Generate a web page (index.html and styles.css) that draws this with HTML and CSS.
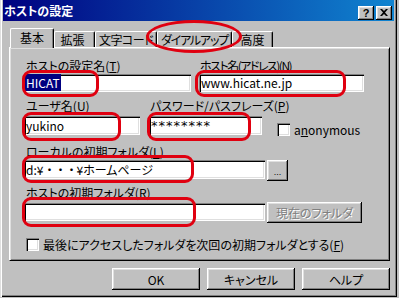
FILE: index.html
```html
<!DOCTYPE html>
<html lang="ja">

<head>
    <meta charset="UTF-8">
    <title>ホストの設定</title>
    <link rel="stylesheet" href="styles.css">
</head>

<body>

    <div class="window">
        <div class="titlebar">
            <span class="title">ホストの設定</span>
            <div class="caption-btns">
                <span class="cap-btn help">?</span>
                <span class="cap-btn">
                    <svg width="8" height="7" viewBox="0 0 8 7">
                        <path d="M0 0 L2 0 L4 2 L6 0 L8 0 L5 3.5 L8 7 L6 7 L4 5 L2 7 L0 7 L3 3.5 Z" fill="#000"/>
                    </svg>
                </span>
            </div>
        </div>

        <div class="tabs">
            <div class="tab active t-basic">基本</div>
            <div class="tab t-ext">拡張</div>
            <div class="tab t-code">文字コード</div>
            <div class="tab t-dial">ダイアルアップ</div>
            <div class="tab t-adv">高度</div>
        </div>

        <div class="panel">
            <div class="row row-a">
                <div class="field f-name">
                    <label>ホストの設定名(<u>T</u>)</label>
                    <div class="edit"><span class="sel">HICAT</span></div>
                </div>
                <div class="field f-host">
                    <label>ホスト名(アドレス)(<u>N</u>)</label>
                    <div class="edit">www.hicat.ne.jp</div>
                </div>
            </div>

            <div class="row row-b">
                <div class="field f-user">
                    <label>ユーザ名(<u>U</u>)</label>
                    <div class="edit">yukino</div>
                </div>
                <div class="field f-pass">
                    <label>パスワード/パスフレーズ(<u>P</u>)</label>
                    <div class="edit stars">********</div>
                </div>
                <div class="check-item anon">
                    <span class="check"></span>
                    <span>a<u>n</u>onymous</span>
                </div>
            </div>

            <div class="row row-c">
                <div class="field f-wide">
                    <label>ローカルの初期フォルダ(<u>L</u>)</label>
                    <div class="edit">d:¥<span class="dots">・・・</span>¥ホームページ</div>
                </div>
                <div class="btn btn-browse">...</div>
            </div>

            <div class="row row-d">
                <div class="field f-wide">
                    <label>ホストの初期フォルダ(<u>R</u>)</label>
                    <div class="edit"></div>
                </div>
                <div class="btn btn-current disabled">現在のフォルダ</div>
            </div>

            <div class="row row-e">
                <div class="check-item">
                    <span class="check"></span>
                    <span>最後にアクセスしたフォルダを次回の初期フォルダとする(<u>F</u>)</span>
                </div>
            </div>
        </div>

        <div class="buttons">
            <div class="btn btn-main">OK</div>
            <div class="btn btn-main">キャンセル</div>
            <div class="btn btn-main">ヘルプ</div>
        </div>

        <!-- red annotation marks -->
        <div class="mark m-tab"></div>
        <div class="mark m-name"></div>
        <div class="mark m-host"></div>
        <div class="mark m-user"></div>
        <div class="mark m-pass"></div>
        <div class="mark m-local"></div>
        <div class="mark m-remote"></div>
    </div>

</body>

</html>
```

FILE: styles.css
```css
body {
    margin: 0;
    background-color: #c0c0c0;
    font-family: "Noto Sans CJK JP", sans-serif;
    font-size: 12px;
    font-feature-settings: "palt";
    color: #000;
}

.window {
    position: relative;
    width: 397px;
    height: 297px;
    box-sizing: border-box;
    padding: 0 3px;
    background-color: #c0c0c0;
    box-shadow: inset 1px 0 #dfdfdf, inset 2px 0 #fff, inset -1px -1px #000, inset -2px -2px #808080;
}

/* title bar */

.titlebar {
    display: flex;
    align-items: center;
    justify-content: space-between;
    height: 21px;
    background: linear-gradient(to right, #000080, #1084d0);
}

.title {
    color: #fff;
    font-weight: bold;
    padding-left: 1px;
    line-height: 21px;
}

.caption-btns {
    display: flex;
    gap: 2px;
    margin-right: 2px;
    margin-top: 4px;
}

.cap-btn {
    display: flex;
    align-items: center;
    justify-content: center;
    width: 16px;
    height: 14px;
    box-sizing: border-box;
    background-color: #c0c0c0;
    box-shadow: inset -1px -1px #000, inset 1px 1px #fff, inset -2px -2px #808080, inset 2px 2px #dfdfdf;
}

.cap-btn.help {
    font-family: "Liberation Sans", sans-serif;
    font-weight: bold;
    font-size: 11px;
    line-height: 14px;
}

/* tabs */

.tabs {
    display: flex;
    align-items: flex-end;
    height: 19px;
    margin-top: 7px;
    padding-left: 7px;
}

.tab {
    height: 16px;
    box-sizing: border-box;
    border-top: 1px solid #fff;
    border-left: 1px solid #fff;
    border-right: 1px solid #000;
    border-radius: 2px 2px 0 0;
    box-shadow: inset -1px 0 #808080;
    text-align: center;
    line-height: 15px;
    white-space: nowrap;
}

.tab.active {
    position: relative;
    z-index: 1;
    height: 20px;
    margin-bottom: -1px;
    background-color: #c0c0c0;
    line-height: 18px;
}

.t-basic { width: 44px; }
.t-ext { width: 41px; padding-right: 4px; }
.t-code { width: 62px; letter-spacing: -0.5px; }
.t-dial { width: 75px; letter-spacing: -1.2px; }
.t-adv { width: 41px; }

/* tab page */

.panel {
    width: 381px;
    height: 214px;
    box-sizing: border-box;
    margin-left: 6px;
    padding-left: 14px;
    border-top: 1px solid #fff;
    border-left: 1px solid #fff;
    border-right: 1px solid #000;
    border-bottom: 1px solid #000;
    box-shadow: inset 1px 1px #dfdfdf, inset -1px -1px #808080;
}

.row {
    display: flex;
    align-items: flex-start;
}

.field {
    display: flex;
    flex-direction: column;
}

.field label {
    height: 14px;
    line-height: 14px;
    padding-left: 2px;
    white-space: nowrap;
}

.edit {
    height: 19px;
    box-sizing: border-box;
    padding: 0 2px;
    background-color: #fff;
    box-shadow: inset 1px 1px #808080, inset 2px 2px #000, inset -1px -1px #fff, inset -2px -2px #dfdfdf;
    line-height: 19px;
    white-space: nowrap;
    overflow: hidden;
}

.sel {
    background-color: #000080;
    color: #fff;
    padding: 0 1px;
    margin-left: -1px;
}

.stars {
    font-family: "DejaVu Sans", sans-serif;
    font-size: 13px;
    letter-spacing: 1px;
}

.dots {
    font-feature-settings: normal;
    letter-spacing: -1px;
}

.row-a { margin-top: 11px; }
.row-a .edit { height: 18px; line-height: 18px; margin-top: 1px; }
.f-name { width: 167px; }
.f-host { width: 165px; margin-left: 8px; }
.f-host label { padding-left: 1px; letter-spacing: -1.5px; }

.row-b { margin-top: 7px; }
.row-b .edit { margin-top: 3px; }
.f-user { width: 116px; }
.f-pass { width: 113px; margin-left: 9px; }
.f-pass label { padding-left: 1px; }

.check-item {
    display: flex;
    align-items: center;
    gap: 4px;
    white-space: nowrap;
}

.check {
    width: 13px;
    height: 13px;
    box-sizing: border-box;
    background-color: #fff;
    box-shadow: inset 1px 1px #808080, inset 2px 2px #000, inset -1px -1px #fff, inset -2px -2px #dfdfdf;
}

.anon {
    margin-left: 15px;
    margin-top: 22px;
}

.row-c { margin-top: 7px; }
.row-c .edit { margin-top: 1px; }
.f-wide { width: 241px; }

.row-d { margin-top: 5px; }
.row-d .edit { height: 18px; margin-top: 3px; }

.btn {
    display: flex;
    align-items: center;
    justify-content: center;
    box-sizing: border-box;
    background-color: #c0c0c0;
    box-shadow: inset -1px -1px #000, inset 1px 1px #fff, inset -2px -2px #808080, inset 2px 2px #dfdfdf;
    white-space: nowrap;
}

.btn-browse {
    width: 21px;
    height: 21px;
    margin-left: 2px;
    margin-top: 15px;
    font-family: "Liberation Sans", sans-serif;
    font-size: 9px;
    padding-top: 2px;
}

.btn-current {
    width: 95px;
    height: 21px;
    margin-left: 2px;
    margin-top: 16px;
}

.disabled {
    color: #808080;
    text-shadow: 1px 1px #fff;
}

.row-e { margin-top: 13px; padding-left: 2px; }

/* dialog buttons */

.buttons {
    display: flex;
    justify-content: flex-end;
    gap: 7px;
    margin-top: 7px;
    padding-right: 4px;
}

.btn-main {
    width: 88px;
    height: 22px;
}

/* red annotation marks */

.mark {
    position: absolute;
    box-sizing: border-box;
    border: 3px solid #e00010;
    border-radius: 9px;
}

.m-tab { left: 146px; top: 20px; width: 96px; height: 33px; border-radius: 50%; }
.m-name { left: 22px; top: 70px; width: 77px; height: 27px; }
.m-host { left: 195px; top: 70px; width: 151px; height: 27px; }
.m-user { left: 22px; top: 112px; width: 99px; height: 29px; }
.m-pass { left: 147px; top: 112px; width: 104px; height: 29px; }
.m-local { left: 22px; top: 155px; width: 172px; height: 28px; }
.m-remote { left: 22px; top: 197px; width: 174px; height: 30px; }
```
